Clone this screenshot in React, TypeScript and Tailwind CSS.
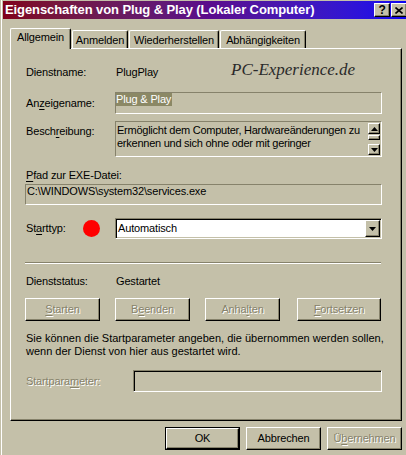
import React from "react";

const sunken2 =
  "border border-t-[#86826b] border-l-[#86826b] border-r-white border-b-white shadow-[inset_1px_1px_0_#000000,inset_-1px_-1px_0_#c4c0a9]";
const sunken1 =
  "border border-t-[#86826b] border-l-[#86826b] border-r-white border-b-white";
const raised =
  "border border-t-white border-l-white border-r-black border-b-black shadow-[inset_-1px_-1px_0_#86826b]";
const disabledText = "text-[#86826b] [text-shadow:1px_1px_0_#ffffff]";

function U({ children }: { children: React.ReactNode }) {
  return <span className="underline decoration-1 underline-offset-[2px]">{children}</span>;
}

function DownArrow() {
  return (
    <svg width="7" height="4" viewBox="0 0 7 4">
      <path d="M0 0H7L3.5 4Z" fill="#000" />
    </svg>
  );
}

function UpArrow() {
  return (
    <svg width="7" height="4" viewBox="0 0 7 4">
      <path d="M0 4H7L3.5 0Z" fill="#000" />
    </svg>
  );
}

function Btn({
  children,
  disabled,
  w,
  className = "",
}: {
  children: React.ReactNode;
  disabled?: boolean;
  w: string;
  className?: string;
}) {
  return (
    <div
      className={`${w} h-[23px] ${raised} bg-[#c4c0a9] flex items-center justify-center leading-[13px] whitespace-nowrap ${
        disabled ? disabledText : "text-black"
      } ${className}`}
    >
      {children}
    </div>
  );
}

export default function App() {
  return (
    <div className="w-[406px] h-[455px] overflow-hidden bg-[#c4c0a9] pl-px font-['Liberation_Sans',Arial,sans-serif] text-[11px] tracking-[-0.15px] text-black">
      <div className="h-full border-l border-l-white pl-px flex flex-col">
        {/* Title bar */}
        <div className="mt-px h-[18px] w-[410px] bg-gradient-to-r from-[#80001a] via-[#5a0a8c] to-[#0000f5] flex items-center">
          <div className="pl-[2px] text-white font-bold text-[13px] tracking-[-0.1px] leading-[18px] whitespace-nowrap">
            Eigenschaften von Plug &amp; Play (Lokaler Computer)
          </div>
          <div className="ml-auto flex items-center mr-[6px]">
            <div className={`w-[16px] h-[14px] ${raised} bg-[#c4c0a9] flex items-center justify-center`}>
              <span className="font-bold text-[12px] leading-none text-black">?</span>
            </div>
            <div className={`ml-px w-[16px] h-[14px] ${raised} bg-[#c4c0a9] flex items-center justify-center`}>
              <svg width="8" height="7" viewBox="0 0 8 7">
                <path d="M0.5 0.5L7.5 6.5M7.5 0.5L0.5 6.5" stroke="#000" strokeWidth="1.6" />
              </svg>
            </div>
          </div>
        </div>

        {/* Tabs */}
        <div className="mt-[9px] ml-[7px] h-[20px] flex items-end whitespace-nowrap">
          <div className="relative z-10 mb-[-1px] h-[21px] w-[61px] bg-[#c4c0a9] border-l border-t border-r border-l-white border-t-white border-r-black rounded-t-[2px] shadow-[inset_-1px_0_0_#86826b] flex items-center justify-center pb-[3px] leading-[13px]">
            Allgemein
          </div>
          <div className="ml-px h-[18px] w-[56px] bg-[#c4c0a9] border-l border-t border-r border-l-white border-t-white border-r-black rounded-t-[2px] shadow-[inset_-1px_0_0_#86826b] flex items-center justify-center pt-px leading-[13px]">
            Anmelden
          </div>
          <div className="ml-px h-[18px] w-[90px] bg-[#c4c0a9] border-l border-t border-r border-l-white border-t-white border-r-black rounded-t-[2px] shadow-[inset_-1px_0_0_#86826b] flex items-center justify-center pt-px leading-[13px]">
            Wiederherstellen
          </div>
          <div className="ml-px h-[18px] w-[86px] bg-[#c4c0a9] border-l border-t border-r border-l-white border-t-white border-r-black rounded-t-[2px] shadow-[inset_-1px_0_0_#86826b] flex items-center justify-center pt-px leading-[13px]">
            Abhängigkeiten
          </div>
        </div>

        {/* Panel */}
        <div className={`ml-[7px] w-[392px] h-[373px] ${raised} pl-[14px]`}>
          <div className="w-[357px] flex flex-col leading-[13px] whitespace-nowrap">
            {/* Dienstname */}
            <div className="mt-[17px] h-[13px] flex items-center">
              <div className="w-[90px] pl-px">Dienstname:</div>
              <div className="w-[116px] pl-px">PlugPlay</div>
              <div className="relative -top-[3px] font-['Liberation_Serif',serif] italic text-[17px] tracking-normal leading-none text-[#2a2a2a]">
                PC-Experience.de
              </div>
            </div>

            {/* Anzeigename */}
            <div className="mt-[13px] h-[22px] flex">
              <div className="w-[90px] pl-px flex items-center">
                <span>
                  An<U>z</U>eigename:
                </span>
              </div>
              <div className={`w-[267px] h-[22px] ${sunken1}`}>
                <span className="inline-block bg-[#8b8865] text-white leading-[13px] pr-px">
                  Plug &amp; Play
                </span>
              </div>
            </div>

            {/* Beschreibung */}
            <div className="mt-[7px] h-[36px] flex">
              <div className="w-[90px] pl-px pt-[4px]">
                Besch<U>r</U>eibung:
              </div>
              <div className={`w-[267px] h-[36px] ${sunken1} flex`}>
                <div className="flex-1 pl-px pt-[2px] leading-[13px] tracking-[-0.25px] overflow-hidden">
                  Ermöglicht dem Computer, Hardwareänderungen zu
                  <br />
                  erkennen und sich ohne oder mit geringer
                </div>
                <div className="w-[12px] my-px mr-px flex flex-col">
                  <div className={`h-[11px] ${raised} bg-[#c4c0a9] flex items-center justify-center`}>
                    <UpArrow />
                  </div>
                  <div className="flex-1">
                    <div className={`mt-px h-[5px] ${raised} bg-[#c4c0a9]`} />
                  </div>
                  <div className={`h-[11px] ${raised} bg-[#c4c0a9] flex items-center justify-center`}>
                    <DownArrow />
                  </div>
                </div>
              </div>
            </div>

            {/* Pfad */}
            <div className="mt-[12px] pl-px">
              <U>P</U>fad zur EXE-Datei:
            </div>
            <div className={`mt-[2px] w-[357px] h-[21px] ${sunken1} pl-px`}>
              C:\WINDOWS\system32\services.exe
            </div>

            {/* Starttyp */}
            <div className="mt-[13px] h-[21px] flex items-center">
              <div className="w-[58px] pl-px">
                St<U>a</U>rttyp:
              </div>
              <div className="w-[17px] h-[17px] rounded-full bg-[#ff0000] blur-[0.6px]" />
              <div className={`ml-[15px] w-[267px] h-[21px] ${sunken2} bg-white flex items-center`}>
                <div className="flex-1 pl-[2px]">Automatisch</div>
                <div className={`w-[15px] h-[17px] mr-px ${raised} bg-[#c4c0a9] flex items-center justify-center`}>
                  <DownArrow />
                </div>
              </div>
            </div>

            {/* Separator */}
            <div className="mt-[23px] w-[356px] h-0 border-t border-b border-t-[#86826b] border-b-white" />

            {/* Dienststatus */}
            <div className="mt-[11px] flex">
              <div className="w-[90px] pl-px">Dienststatus:</div>
              <div className="pl-px">Gestartet</div>
            </div>

            {/* Buttons */}
            <div className="mt-[10px] flex">
              <Btn w="w-[75px]" disabled>
                <span>
                  <U>S</U>tarten
                </span>
              </Btn>
              <Btn w="w-[75px]" disabled className="ml-[15px]">
                <span>
                  B<U>e</U>enden
                </span>
              </Btn>
              <Btn w="w-[75px]" disabled className="ml-[15px]">
                <span>
                  Anha<U>l</U>ten
                </span>
              </Btn>
              <Btn w="w-[84px]" disabled className="ml-[17px]">
                <span>
                  <U>F</U>ortsetzen
                </span>
              </Btn>
            </div>

            {/* Info text */}
            <div className="mt-[11px] pl-px tracking-[0px]">
              Sie können die Startparameter angeben, die übernommen werden sollen,
              <br />
              wenn der Dienst von hier aus gestartet wird.
            </div>

            {/* Startparameter */}
            <div className="mt-[12px] h-[22px] flex items-center">
              <div className={`w-[108px] pl-px ${disabledText}`}>
                Startpara<U>m</U>eter:
              </div>
              <div className={`w-[249px] h-[22px] ${sunken2}`} />
            </div>
          </div>
        </div>

        {/* Bottom buttons */}
        <div className="mt-[6px] ml-[7px] w-[392px] flex justify-end gap-[6px]">
          <div className="w-[75px] h-[23px] border border-black">
            <div className={`w-full h-full ${raised} flex items-center justify-center leading-[13px]`}>
              OK
            </div>
          </div>
          <Btn w="w-[75px]">Abbrechen</Btn>
          <Btn w="w-[75px]" disabled>
            <span>
              Ü<U>b</U>ernehmen
            </span>
          </Btn>
        </div>
      </div>
    </div>
  );
}
